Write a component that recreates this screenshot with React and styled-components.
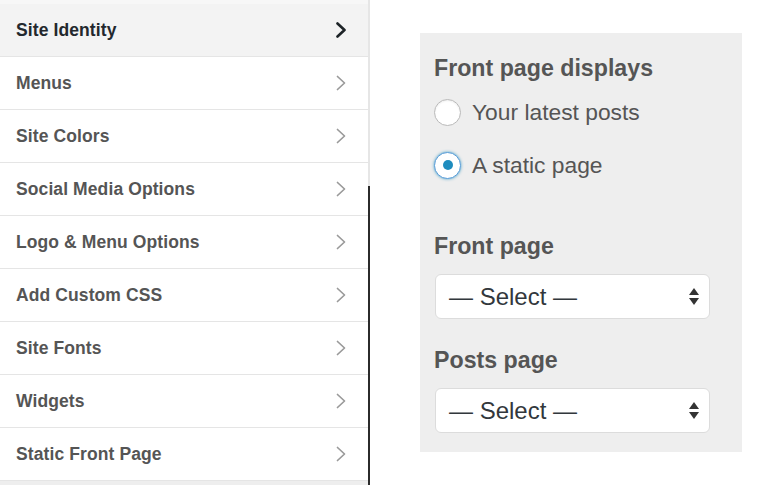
import React from "react";
import styled, { createGlobalStyle } from "styled-components";

const Global = createGlobalStyle`
  html, body { margin: 0; padding: 0; background: #fff; }
  body { font-family: "Liberation Sans", Arial, sans-serif; }
  * { box-sizing: border-box; }
`;

const Page = styled.div`
  display: flex;
  width: 768px;
  height: 485px;
  overflow: hidden;
  background: #fff;
`;

const Sidebar = styled.div`
  position: relative;
  width: 370px;
  flex: none;
  display: flex;
  flex-direction: column;
  border-right: 2px solid #e6e6e6;
  background: #fff;
  &::after {
    content: "";
    position: absolute;
    right: -2px;
    top: 186px;
    bottom: 0;
    width: 2px;
    background: #2b2b2b;
  }
`;

const TopStrip = styled.div`
  height: 4px;
  background: #f7f7f7;
  flex: none;
`;

const Row = styled.div`
  height: 53px;
  flex: none;
  display: flex;
  align-items: center;
  justify-content: space-between;
  padding: 0 21px 0 16px;
  border-bottom: 1px solid #e5e5e5;
  background: ${(p) => (p.$active ? "#f3f3f3" : "#fff")};
  color: ${(p) => (p.$active ? "#23282d" : "#555")};
  font-size: 17.5px;
  font-weight: 700;
  letter-spacing: 0.1px;
`;

const Footer = styled.div`
  flex: 1;
  background: #eeeeee;
`;

const Chevron = ({ active }) => (
  <svg width="12" height="16" viewBox="0 0 12 16">
    <path
      d="M2.5 1.5 L9.5 8 L2.5 14.5"
      fill="none"
      stroke={active ? "#1d2327" : "#9a9a9a"}
      strokeWidth={active ? 2.6 : 1.7}
      strokeLinecap="round"
      strokeLinejoin="round"
    />
  </svg>
);

const Main = styled.div`
  flex: 1;
  padding: 33px 0 0 50px;
`;

const Panel = styled.div`
  width: 322px;
  height: 419px;
  background: #eeeeee;
  padding: 20px 14px 0 14px;
  display: flex;
  flex-direction: column;
`;

const Heading = styled.div`
  font-size: 23.2px;
  font-weight: 700;
  color: #555;
  line-height: 30px;
  margin-top: ${(p) => p.$mt || 0}px;
`;

const RadioRow = styled.label`
  display: flex;
  align-items: center;
  gap: 11px;
  height: 28px;
  margin-top: ${(p) => p.$mt}px;
  font-size: 22.8px;
  color: #555;
`;

const Radio = styled.span`
  width: 27px;
  height: 27px;
  border-radius: 50%;
  background: #fff;
  border: 1px solid ${(p) => (p.$checked ? "#5b9dd9" : "#b9b9b9")};
  box-shadow: ${(p) =>
    p.$checked
      ? "0 0 3px rgba(30,140,190,0.8)"
      : "inset 0 1px 2px rgba(0,0,0,0.07)"};
  display: flex;
  align-items: center;
  justify-content: center;
  flex: none;
  &::before {
    content: "";
    width: 10px;
    height: 10px;
    border-radius: 50%;
    background: #1e8cbe;
    display: ${(p) => (p.$checked ? "block" : "none")};
  }
`;

const Select = styled.div`
  width: 275px;
  height: 45px;
  margin: 13px 0 0 1px;
  background: #fff;
  border: 1px solid #dcdcdc;
  border-radius: 6px;
  display: flex;
  align-items: center;
  justify-content: space-between;
  padding: 0 9px 0 13px;
  font-size: 24px;
  color: #32373c;
`;

const Arrows = () => (
  <svg width="12" height="19" viewBox="0 0 12 19">
    <path d="M6 1 L11 8 L1 8 Z" fill="#333" />
    <path d="M1 11 L11 11 L6 18 Z" fill="#333" />
  </svg>
);

const items = [
  "Site Identity",
  "Menus",
  "Site Colors",
  "Social Media Options",
  "Logo & Menu Options",
  "Add Custom CSS",
  "Site Fonts",
  "Widgets",
  "Static Front Page",
];

export default function App() {
  return (
    <>
      <Global />
      <Page>
        <Sidebar>
          <TopStrip />
          {items.map((t, i) => (
            <Row key={t} $active={i === 0}>
              <span>{t}</span>
              <Chevron active={i === 0} />
            </Row>
          ))}
          <Footer />
        </Sidebar>
        <Main>
          <Panel>
            <Heading>Front page displays</Heading>
            <RadioRow $mt={15}>
              <Radio />
              Your latest posts
            </RadioRow>
            <RadioRow $mt={25}>
              <Radio $checked />
              A static page
            </RadioRow>
            <Heading $mt={52}>Front page</Heading>
            <Select>
              <span>— Select —</span>
              <Arrows />
            </Select>
            <Heading $mt={26}>Posts page</Heading>
            <Select>
              <span>— Select —</span>
              <Arrows />
            </Select>
          </Panel>
        </Main>
      </Page>
    </>
  );
}
